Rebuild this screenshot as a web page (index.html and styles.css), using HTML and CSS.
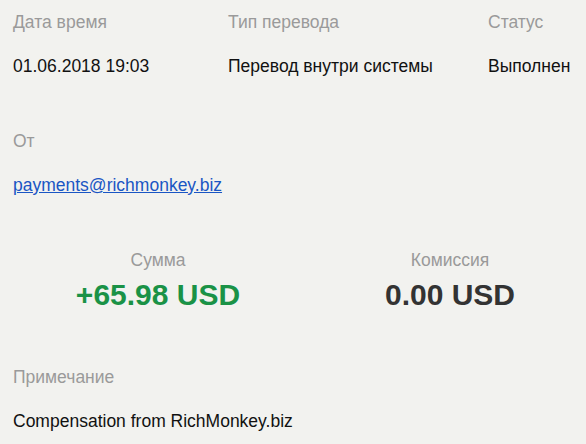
FILE: index.html
```html
<!DOCTYPE html>
<html lang="ru">
<head>
<meta charset="utf-8">
<link rel="stylesheet" href="styles.css">
</head>
<body>
<div class="page">
  <div class="grid3">
    <div class="field">
      <div class="label">Дата время</div>
      <div class="value">01.06.2018 19:03</div>
    </div>
    <div class="field">
      <div class="label">Тип перевода</div>
      <div class="value">Перевод внутри системы</div>
    </div>
    <div class="field">
      <div class="label">Статус</div>
      <div class="value">Выполнен</div>
    </div>
  </div>

  <div class="field">
    <div class="label">От</div>
    <div class="value"><a class="link" href="#">payments@richmonkey.biz</a></div>
  </div>

  <div class="summary">
    <div class="sum">
      <div class="label">Сумма</div>
      <div class="amount plus">+65.98 USD</div>
    </div>
    <div class="sum">
      <div class="label">Комиссия</div>
      <div class="amount">0.00 USD</div>
    </div>
  </div>

  <div class="field">
    <div class="label">Примечание</div>
    <div class="value">Compensation from RichMonkey.biz</div>
  </div>
</div>
</body>
</html>
```

FILE: styles.css
```css
html, body {
  margin: 0;
  padding: 0;
  background: #f2f2ef;
  overflow: hidden;
}
body {
  font-family: "Liberation Sans", Arial, sans-serif;
  font-size: 17.5px;
  line-height: 20px;
  color: #111;
}
.page {
  padding: 12px 0 0 13px;
  display: flex;
  flex-direction: column;
  gap: 55px;
}
.grid3 {
  display: grid;
  grid-template-columns: 215px 260px auto;
}
.field {
  display: flex;
  flex-direction: column;
  gap: 24px;
}
.label {
  color: #9a9a9a;
}
.value {
  color: #111;
  white-space: nowrap;
}
.link {
  color: #1a56c4;
  text-decoration: underline;
}
.summary {
  display: grid;
  grid-template-columns: 292px 292px;
  margin-left: -1px;
  width: 584px;
}
.sum {
  display: flex;
  flex-direction: column;
  align-items: center;
  gap: 8px;
}
.amount {
  font-size: 30px;
  line-height: 34px;
  font-weight: bold;
  color: #333;
}
.amount.plus {
  color: #1a9246;
}
```
